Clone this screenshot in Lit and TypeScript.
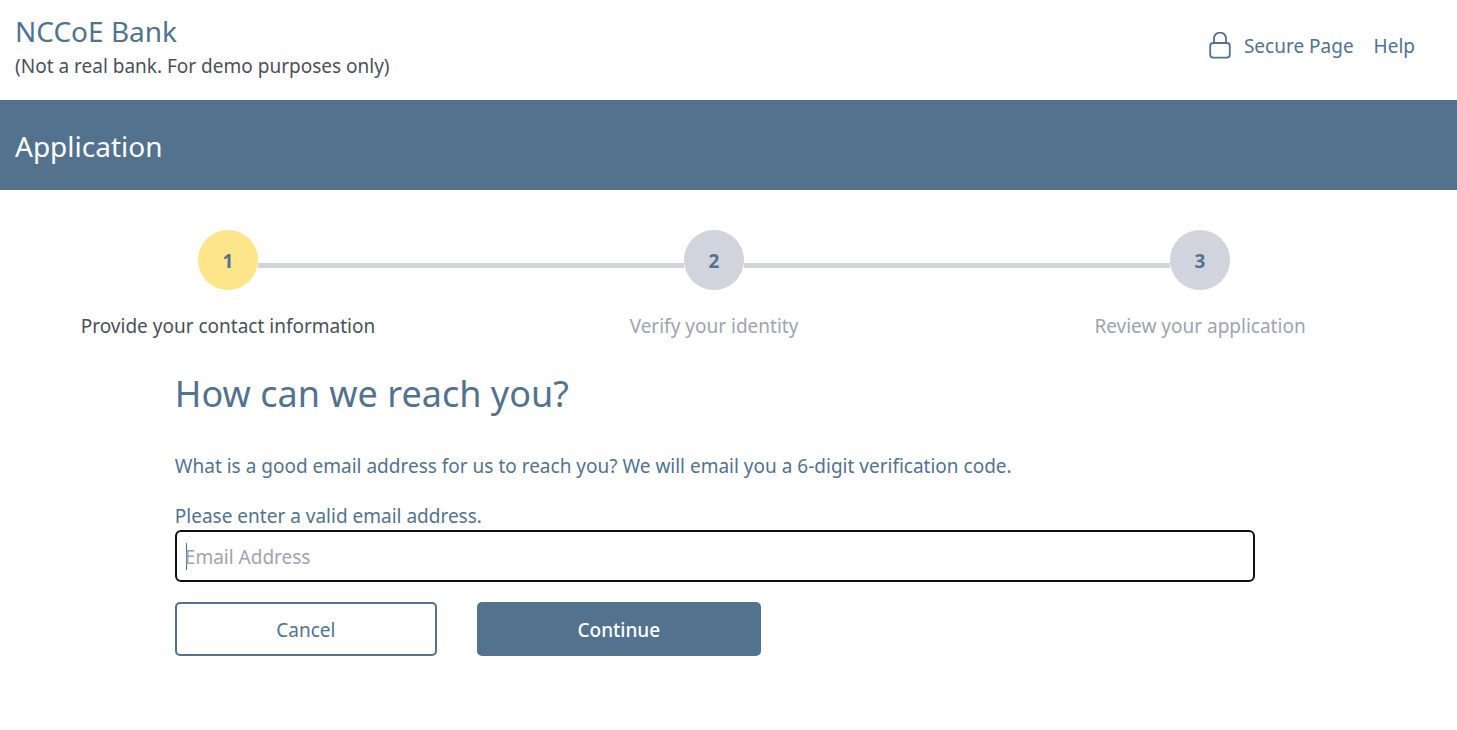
import { LitElement, html, css } from "lit";
import { customElement, state } from "lit/decorators.js";

interface Step {
  label: string;
}

@customElement("app-root")
export class AppRoot extends LitElement {
  static styles = css`
    :host {
      display: block;
      min-height: 100vh;
      background: #fff;
      color: #53728e;
      font-family: "Segoe UI", "Noto Sans", "Open Sans", sans-serif;
      font-size: 19px;
      line-height: 30px;
    }
    * {
      box-sizing: border-box;
    }
    h1,
    h2,
    p,
    ol {
      margin: 0;
      padding: 0;
      font-weight: 400;
    }
    .top {
      display: flex;
      justify-content: space-between;
      align-items: center;
      min-height: 100px;
      padding: 0 42px 8px 15px;
    }
    .brand {
      font-size: 28px;
      line-height: 40px;
    }
    .note {
      color: #4b5059;
    }
    .links {
      display: flex;
      align-items: center;
      gap: 20px;
    }
    .links a {
      display: flex;
      align-items: center;
      gap: 13px;
      color: inherit;
      text-decoration: none;
    }
    .lock {
      width: 22px;
      height: 28px;
    }
    .banner {
      padding: 24px 15px 21px;
      background: #53728e;
      color: #fff;
    }
    .banner h1 {
      font-size: 28px;
      line-height: 45px;
    }
    .steps {
      display: grid;
      grid-template-columns: repeat(3, 1fr);
      margin: 0 14px 0 -15px;
      padding-top: 40px;
      list-style: none;
      color: #a0a3b1;
    }
    .step {
      display: grid;
      grid-template-columns: 1fr 60px 1fr;
      align-items: center;
      row-gap: 21px;
    }
    .dot {
      display: grid;
      place-items: center;
      height: 60px;
      padding-top: 2px;
      border-radius: 50%;
      background: #d1d4dc;
      color: #53728e;
      font-weight: 700;
    }
    .line {
      height: 5px;
      margin-top: 10px;
      background: #d1d4dc;
    }
    .line.none {
      background: none;
    }
    .label {
      grid-column: 1 / -1;
      text-align: center;
    }
    .current {
      color: #4b5059;
    }
    .current .dot {
      background: #fde58a;
    }
    .form {
      width: 74.12%;
      margin-left: 12%;
      padding-top: 28px;
    }
    .form h2 {
      font-size: 36px;
      line-height: 50px;
    }
    .intro {
      margin-top: 32px;
    }
    .field {
      display: block;
      margin-top: 21px;
      line-height: 28px;
    }
    .email {
      display: block;
      width: 100%;
      height: 52px;
      padding: 2px 8px 0;
      border: 2px solid #101010;
      border-radius: 6px;
      outline: none;
      background: #fff;
      color: #53728e;
      font: inherit;
    }
    .email:placeholder-shown:focus {
      caret-color: transparent;
      background: linear-gradient(#53728e, #53728e) 9px 11px / 1px 27px no-repeat #fff;
    }
    .email::placeholder {
      color: #a0a3b1;
      opacity: 1;
    }
    .actions {
      display: flex;
      gap: 40px;
      margin-top: 20px;
    }
    .button {
      width: 262px;
      height: 54px;
      padding: 2px 0 0;
      border: 2px solid #53728e;
      border-radius: 5px;
      background: #fff;
      color: #53728e;
      font: inherit;
      cursor: pointer;
    }
    .primary {
      width: 284px;
      background: #53728e;
      color: #fff;
      font-weight: 500;
    }
  `;

  @state() private current = 0;

  private steps: Step[] = [
    { label: "Provide your contact information" },
    { label: "Verify your identity" },
    { label: "Review your application" },
  ];

  firstUpdated() {
    this.renderRoot.querySelector<HTMLInputElement>(".email")?.focus();
  }

  render() {
    const last = this.steps.length - 1;
    return html`
      <header class="top">
        <div>
          <div class="brand">NCCoE Bank</div>
          <p class="note">(Not a real bank. For demo purposes only)</p>
        </div>
        <nav class="links">
          <a href="#secure">
            <svg class="lock" viewBox="0 0 22 28" fill="none" stroke="currentColor" stroke-width="1.8" aria-hidden="true">
              <rect x="1.2" y="11" width="19.6" height="14.6" rx="3" />
              <path d="M5 11V6.5a6 6 0 0 1 12 0V11" />
            </svg>
            Secure Page
          </a>
          <a href="#help">Help</a>
        </nav>
      </header>
      <div class="banner"><h1>Application</h1></div>
      <main>
        <ol class="steps">
          ${this.steps.map(
            (s, i) => html`
              <li class="step ${i === this.current ? "current" : ""}">
                <span class="line ${i === 0 ? "none" : ""}"></span>
                <span class="dot">${i + 1}</span>
                <span class="line ${i === last ? "none" : ""}"></span>
                <span class="label">${s.label}</span>
              </li>
            `
          )}
        </ol>
        <form class="form" @submit=${(e: Event) => e.preventDefault()}>
          <h2>How can we reach you?</h2>
          <p class="intro">
            What is a good email address for us to reach you? We will email you a 6-digit verification code.
          </p>
          <label class="field" for="email">Please enter a valid email address.</label>
          <input class="email" id="email" type="email" placeholder="Email Address" />
          <div class="actions">
            <button class="button" type="button">Cancel</button>
            <button class="button primary" type="submit">Continue</button>
          </div>
        </form>
      </main>
    `;
  }
}
